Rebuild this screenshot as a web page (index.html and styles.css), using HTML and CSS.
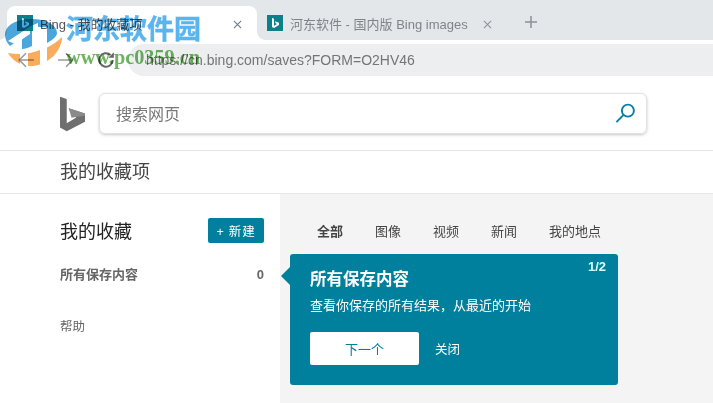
FILE: index.html
```html
<!DOCTYPE html>
<html lang="zh-CN">
<head>
<meta charset="utf-8">
<title>Bing - 我的收藏项</title>
<link rel="stylesheet" href="styles.css">
</head>
<body>
<div class="tabstrip">
  <div class="tab tab-active">
    <svg class="favicon" viewBox="0 0 16 16"><rect width="16" height="16" fill="#0b7f8a"/><path d="M5 3l2 .7v7l3-1.700-1.400-.7-.8-2 4.200 1.500v2.100L7 13l-2-1.100z" fill="#fff"/></svg>
    <span class="tab-title">Bing - 我的收藏项</span>
    <svg class="tab-close" viewBox="0 0 10 10"><path d="M1 1l8 8M9 1l-8 8"/></svg>
  </div>
  <div class="tab">
    <svg class="favicon" viewBox="0 0 16 16"><rect width="16" height="16" fill="#0b7f8a"/><path d="M5 3l2 .7v7l3-1.700-1.400-.7-.8-2 4.200 1.500v2.100L7 13l-2-1.100z" fill="#fff"/></svg>
    <span class="tab-title tab-title-dim">河东软件 - 国内版 Bing images</span>
    <svg class="tab-close tab-close-dim" viewBox="0 0 10 10"><path d="M1 1l8 8M9 1l-8 8"/></svg>
  </div>
  <svg class="tab-new" viewBox="0 0 12 12"><path d="M6 0v12M0 6h12"/></svg>
</div>
<div class="toolbar">
  <svg class="nav" viewBox="0 0 16 16"><path d="M15 8H2M8 2L2 8l6 6"/></svg>
  <svg class="nav" viewBox="0 0 16 16"><path d="M1 8h13M8 2l6 6-6 6"/></svg>
  <svg class="nav nav-reload" viewBox="0 0 16 16"><path d="M14 8a6 6 0 1 1-2-4.500"/><path class="fill" d="M15 1v5h-5z"/></svg>
  <div class="address">https://cn.bing.com/saves?FORM=O2HV46</div>
</div>
<header class="site-header">
  <svg class="bing-logo" viewBox="0 0 26 36">
    <path fill="#6f6f6f" d="M0 0l7 2.500v25l10-5.800-4.900-2.300-3-7.500L26 17.500v8.500L7 36 0 32z"/>
    <path fill="#8a8a8a" d="M9.100 11.900L26 17.500v2L12 22z"/>
  </svg>
  <div class="search">
    <span class="search-text">搜索网页</span>
    <svg class="search-icon" viewBox="0 0 22 22"><circle cx="13.500" cy="8" r="6.300"/><path d="M9 12.500L1.500 20"/></svg>
  </div>
</header>
<div class="subheader">我的收藏项</div>
<main class="main">
  <aside class="sidebar">
    <div class="side-head">
      <h1 class="side-title">我的收藏</h1>
      <button class="new-btn">+ 新建</button>
    </div>
    <div class="side-row"><span>所有保存内容</span><span>0</span></div>
    <div class="help">帮助</div>
  </aside>
  <section class="content">
    <nav class="filters">
      <span class="filter filter-on">全部</span>
      <span class="filter">图像</span>
      <span class="filter">视频</span>
      <span class="filter">新闻</span>
      <span class="filter">我的地点</span>
    </nav>
    <div class="callout">
      <span class="callout-arrow"></span>
      <span class="callout-count">1/2</span>
      <h2 class="callout-title">所有保存内容</h2>
      <p class="callout-text">查看你保存的所有结果，从最近的开始</p>
      <div class="callout-actions">
        <button class="next-btn">下一个</button>
        <span class="close-link">关闭</span>
      </div>
    </div>
  </section>
</main>
<div class="watermark">
  <svg class="wm-logo" viewBox="0 0 64 68">
    <path fill="#4ba6dc" d="M5 30C5 20 17 14 31 14c15 0 26 6 26 14 0 3-4 7-10 10V22h-9l-6 2v17c-6 3-10 3-10 3V33l-12 8C7 38 5 34 5 30z"/>
    <path fill="#fff" d="M8 36L31 21l7-3v5l-8 3v3L15 39z"/>
    <path fill="#f9ad5c" d="M8 48c12 2 22 1 32-3 10-3 17-8 22-13 0 13-12 27-29 29-12 1-21-6-25-13z"/>
    <path fill="#fff" d="M20 44h8v20h-8zM40 38h7v22h-7z"/>
  </svg>
  <div class="wm-name">河东软件园</div>
  <div class="wm-url">www.pc0359.cn</div>
</div>
</body>
</html>
```

FILE: styles.css
```css
* { box-sizing: border-box; }
html, body { margin: 0; height: 100%; }
body {
  width: 713px;
  height: 403px;
  overflow: hidden;
  position: relative;
  background: #fff;
  font-family: "Liberation Sans", "Noto Sans CJK SC", sans-serif;
  color: #444;
}
.tabstrip {
  height: 40px;
  background: #e4e7ea;
  display: flex;
  align-items: flex-end;
  padding-left: 7px;
}
.tab {
  position: relative;
  width: 250px;
  height: 34px;
  display: flex;
  align-items: center;
  padding: 0 15px 0 10px;
  font-size: 13px;
  border-radius: 8px 8px 0 0;
}
.tab-active { background: #fff; }
.tab-active::before,
.tab-active::after {
  content: "";
  position: absolute;
  bottom: 0;
  width: 8px;
  height: 8px;
}
.tab-active::before {
  left: -8px;
  background: radial-gradient(circle at 0 0, transparent 7.500px, #fff 8px);
}
.tab-active::after {
  right: -8px;
  background: radial-gradient(circle at 100% 0, transparent 7.500px, #fff 8px);
}
.favicon { width: 16px; height: 16px; flex: none; }
.tab-title { margin-left: 7px; flex: 1; white-space: nowrap; color: #555; }
.tab-title-dim { color: #808488; }
.tab-close { width: 9px; height: 9px; flex: none; margin-top: 2px; }
.tab-close path { stroke: #6e7a86; stroke-width: 1.200; fill: none; }
.tab-close-dim path { stroke: #8b949c; }
.tab-new { width: 12px; height: 12px; margin: 0 0 12px 18px; flex: none; }
.tab-new path { stroke: #87929c; stroke-width: 1.500; fill: none; }
.toolbar {
  height: 36px;
  display: flex;
  align-items: center;
  padding: 4px 0 0 17px;
  gap: 22px;
}
.nav { width: 18px; height: 18px; flex: none; }
.nav path { stroke: #9a9a9a; stroke-width: 1.400; fill: none; }
.nav-reload path { stroke: #666; stroke-width: 1.800; }
.nav-reload .fill { fill: #666; stroke: none; }
.address {
  flex: 1;
  height: 32px;
  margin-left: -9px;
  border-radius: 16px 0 0 16px;
  background: #eceef0;
  padding-left: 18px;
  font-size: 14px;
  line-height: 32px;
  color: #757575;
  white-space: nowrap;
}
.site-header {
  height: 75px;
  border-bottom: 1px solid #e4e4e4;
  display: flex;
  align-items: flex-start;
  padding: 17px 66px 0 60px;
}
.bing-logo { width: 25px; height: 36px; flex: none; margin-top: 3px; }
.search {
  flex: 1;
  height: 41px;
  margin-left: 14px;
  border: 1px solid #e2e2e2;
  border-radius: 6px;
  box-shadow: 0 1px 3px rgba(0, 0, 0, .22);
  display: flex;
  align-items: center;
  justify-content: space-between;
  padding: 0 10px 0 16px;
}
.search-text { font-size: 16px; color: #777; margin-top: -2px; }
.search-icon { width: 21px; height: 21px; fill: none; stroke: #0a7ea3; stroke-width: 2; }
.subheader {
  height: 43px;
  border-bottom: 1px solid #e8e8e8;
  padding-left: 60px;
  font-size: 18px;
  line-height: 43px;
  color: #444;
}
.main { display: flex; height: 209px; }
.sidebar { width: 280px; padding: 22px 16px 0 60px; flex: none; }
.side-head {
  display: flex;
  justify-content: space-between;
  align-items: center;
  height: 28px;
}
.side-title { margin: 0; font-size: 18px; font-weight: 400; color: #222; }
.new-btn {
  width: 56px;
  height: 25px;
  border: 0;
  border-radius: 2px;
  padding: 0;
  background: #00809d;
  color: #fff;
  font: 12.500px "Liberation Sans", "Noto Sans CJK SC", sans-serif;
  letter-spacing: .8px;
}
.side-row {
  display: flex;
  justify-content: space-between;
  margin-top: 19px;
  font-size: 13px;
  font-weight: 700;
  line-height: 24px;
  color: #666;
}
.help { margin-top: 30px; font-size: 12.500px; line-height: 20px; color: #666; }
.content { flex: 1; background: #f4f4f4; padding: 0 0 0 10px; }
.filters {
  display: flex;
  gap: 32px;
  height: 58px;
  padding: 28px 0 0 27px;
  font-size: 13px;
  line-height: 20px;
  color: #444;
}
.filter-on { font-weight: 700; }
.callout {
  position: relative;
  width: 328px;
  height: 131px;
  margin-top: 2px;
  padding: 14px 20px 0;
  border-radius: 3px;
  background: #00809d;
  color: #fff;
}
.callout-arrow {
  position: absolute;
  left: -9px;
  top: 13px;
  width: 18px;
  height: 18px;
  background: #00809d;
  clip-path: polygon(50% 0, 100% 50%, 50% 100%, 0 50%);
}
.callout-count {
  position: absolute;
  right: 12px;
  top: 5px;
  font-size: 13px;
  font-weight: 700;
  color: #dff;
}
.callout-title {
  margin: 0;
  font: 700 16.500px/24px "Liberation Serif", "Noto Sans CJK SC", sans-serif;
}
.callout-text { margin: 3px 0 0; font-size: 13px; line-height: 22px; }
.callout-actions { display: flex; align-items: center; gap: 16px; margin-top: 15px; }
.next-btn {
  width: 109px;
  height: 33px;
  border: 0;
  border-radius: 2px;
  padding: 0;
  background: #fff;
  color: #00809d;
  font: 13px "Liberation Sans", "Noto Sans CJK SC", sans-serif;
}
.close-link { font-size: 12.500px; }
.watermark {
  position: absolute;
  left: 0;
  top: 0;
  width: 210px;
  height: 72px;
  pointer-events: none;
  mix-blend-mode: multiply;
}
.wm-logo { position: absolute; left: 0; top: 5px; width: 64px; height: 68px; }
.wm-name {
  position: absolute;
  left: 66px;
  top: 12px;
  font: 700 27px/36px "Liberation Serif", "Noto Sans CJK SC", serif;
  color: #5ab4ee;
  -webkit-text-stroke: .4px #5ab4ee;
  white-space: nowrap;
}
.wm-url {
  position: absolute;
  left: 66px;
  top: 46px;
  font: 700 20.300px/22px "Liberation Serif", serif;
  color: #6cb55e;
  white-space: nowrap;
}
```
